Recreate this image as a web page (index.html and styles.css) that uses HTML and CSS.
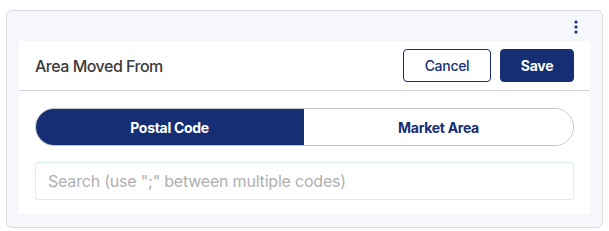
FILE: index.html
```html
<!DOCTYPE html>
<html lang="en">
<head>
  <meta charset="UTF-8" />
  <title>Area Moved From</title>
  <link rel="stylesheet" href="styles.css">
</head>
<body>

  <div class="card">
    <div class="card-top">
      <button class="kebab" aria-label="More options">
        <svg width="4" height="14" viewBox="0 0 4 14">
          <circle cx="2" cy="2" r="1.6" fill="#152e74"/>
          <circle cx="2" cy="7" r="1.6" fill="#152e74"/>
          <circle cx="2" cy="12" r="1.6" fill="#152e74"/>
        </svg>
      </button>
    </div>

    <div class="panel">
      <div class="panel-header">
        <h2>Area Moved From</h2>
        <div class="actions">
          <button class="btn btn-outline">Cancel</button>
          <button class="btn btn-primary">Save</button>
        </div>
      </div>

      <div class="panel-body">
        <div class="toggle">
          <button class="toggle-opt active">Postal Code</button>
          <button class="toggle-opt">Market Area</button>
        </div>
        <input type="text" class="search" placeholder='Search (use ";" between multiple codes)' />
      </div>
    </div>
  </div>

</body>
</html>
```

FILE: styles.css
```css
body {
  margin: 0;
  padding: 10px 6px;
  background: #ffffff;
  font-family: Inter, 'Noto Sans', sans-serif;
}

.card {
  width: 571px;
  padding: 0 12px 13px;
  background-color: #f6f7fc;
  border: 1px solid #d9dbe1;
  border-radius: 6px;
}

.card-top {
  height: 30px;
  display: flex;
  justify-content: flex-end;
  align-items: center;
  padding-right: 12px;
}

.kebab {
  background: none;
  border: none;
  padding: 0;
  margin-top: 2px;
  display: flex;
}

.panel {
  background-color: #ffffff;
}

.panel-header {
  height: 49px;
  display: flex;
  align-items: center;
  justify-content: space-between;
  padding: 0 16px;
  border-bottom: 1px solid #d4d4d8;
}

.panel-header h2 {
  margin: 0;
  font-size: 16px;
  font-weight: 500;
  color: #3b3a3a;
  letter-spacing: -0.5px;
}

.actions {
  display: flex;
  gap: 9px;
}

.btn {
  height: 33px;
  font-family: inherit;
  font-size: 14px;
  font-weight: 500;
  border-radius: 4px;
  cursor: pointer;
  letter-spacing: -0.3px;
}

.btn-outline {
  width: 88px;
  background: #ffffff;
  color: #152e74;
  border: 1px solid #152e74;
}

.btn-primary {
  width: 74px;
  background: #152e74;
  color: #ffffff;
  border: 1px solid #152e74;
  font-weight: 700;
}

.panel-body {
  padding: 17px 16px 14px;
}

.toggle {
  display: flex;
  height: 38px;
  border: 1px solid #c4c4c4;
  border-radius: 19px;
  overflow: hidden;
  box-sizing: border-box;
}

.toggle-opt {
  flex: 1;
  border: none;
  background: #ffffff;
  color: #152e74;
  font-family: inherit;
  font-size: 14px;
  font-weight: 700;
  letter-spacing: -0.3px;
  cursor: pointer;
}

.toggle-opt.active {
  background: #152e74;
  color: #ffffff;
  margin: -1px 0 -1px -1px;
}

.search {
  display: block;
  width: 100%;
  height: 38px;
  margin-top: 16px;
  box-sizing: border-box;
  padding: 0 12px;
  border: 1px solid #d7eef5;
  border-radius: 3px;
  font-family: inherit;
  font-size: 16px;
  letter-spacing: -0.2px;
  outline: none;
}

.search::placeholder {
  color: #b0b0b0;
}
```
